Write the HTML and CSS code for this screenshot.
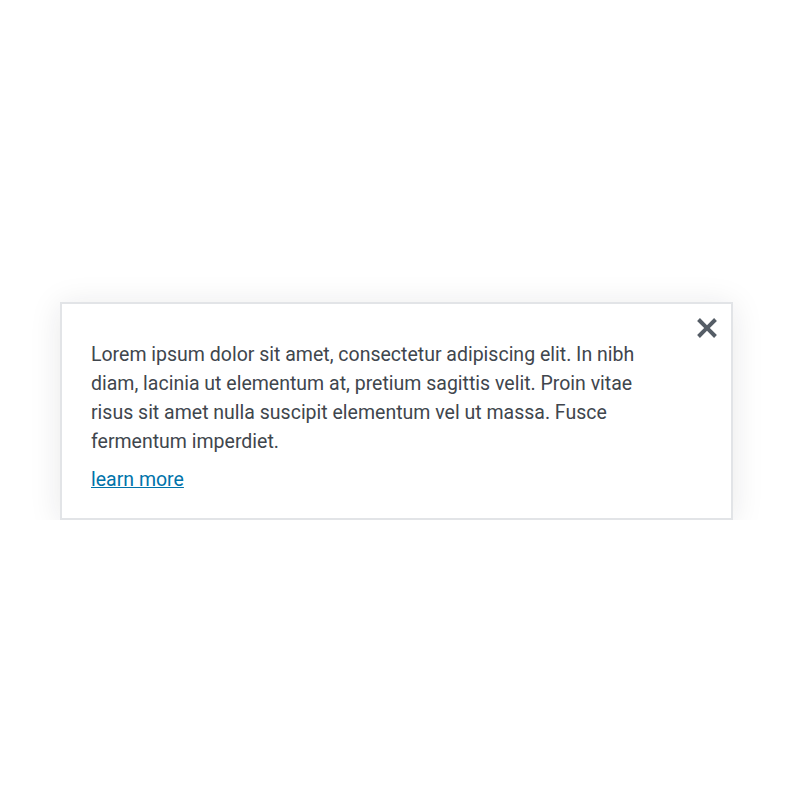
FILE: index.html
```html
<!DOCTYPE html>
<html lang="en">
<head>
<meta charset="utf-8">
<title>Tip</title>
<link rel="stylesheet" href="styles.css">
</head>
<body>
<div class="stage">
  <div class="tip">
    <div class="tip-content">
      <p class="tip-text">Lorem ipsum dolor sit amet, consectetur adipiscing elit. In nibh diam, lacinia ut elementum at, pretium sagittis velit. Proin vitae risus sit amet nulla suscipit elementum vel ut massa. Fusce fermentum imperdiet.</p>
      <p class="tip-text"><a class="tip-link" href="#">learn more</a></p>
    </div>
    <button class="tip-close" type="button" aria-label="Disable tips">
      <svg viewBox="5 5 10 10" width="20" height="20" aria-hidden="true"><path d="M14.95 6.46L11.41 10l3.54 3.54-1.42 1.42L10 11.42l-3.530 3.53-1.42-1.42L8.58 10 5.05 6.47l1.42-1.42L10 8.58l3.54-3.53z"/></svg>
    </button>
  </div>
</div>
</body>
</html>
```

FILE: styles.css
```css
html, body {
  margin: 0;
  padding: 0;
  background: #fff;
}
.stage {
  padding: 302px 0 0 60px;
}
.tip {
  position: relative;
  box-sizing: border-box;
  width: 673px;
  border: 2px solid #e2e4e7;
  background: #fff;
  box-shadow: 0 3px 30px rgba(25, 30, 35, 0.1);
  padding: 36px 80px 24px 29px;
}
.tip-content {
  width: 560px;
}
.tip-text {
  margin: 0 0 9px;
  font-family: Roboto, "Liberation Sans", sans-serif;
  font-size: 19.5px;
  line-height: 29px;
  color: #40464d;
}
.tip-text:last-child {
  margin-bottom: 0;
}
.tip-link {
  color: #0073aa;
  text-decoration: underline;
}
.tip-close {
  position: absolute;
  top: 4px;
  right: 4px;
  width: 40px;
  height: 40px;
  padding: 0;
  border: 0;
  background: transparent;
  display: flex;
  align-items: center;
  justify-content: center;
  cursor: pointer;
}
.tip-close svg {
  fill: #555d66;
  display: block;
}
```
